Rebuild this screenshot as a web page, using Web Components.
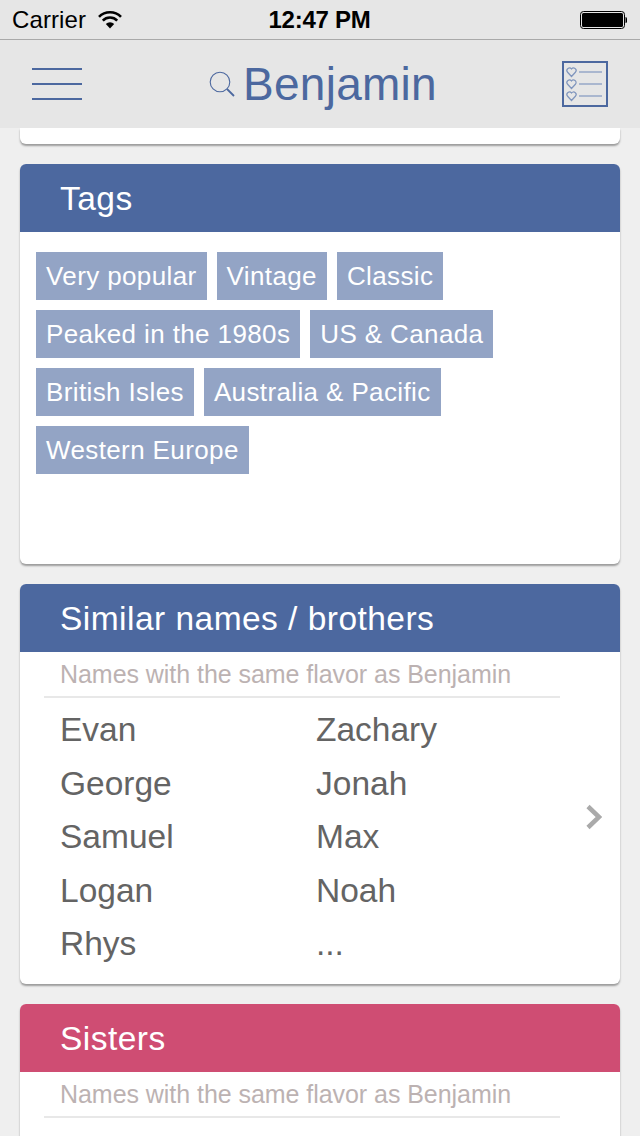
<!DOCTYPE html>
<html>
<head>
<meta charset="utf-8">
<style>
  html, body { margin: 0; padding: 0; }
  body { display: flex; flex-direction: column; width: 640px; height: 1136px; overflow: hidden; background: #efefef; font-family: "Liberation Sans", Arial, sans-serif; }
  status-bar, nav-bar { flex: none; }
  .content { flex: 1; min-height: 0; overflow: hidden; display: flex; flex-direction: column; gap: 20px; padding: 0 20px; }
</style>
</head>
<body>
<status-bar></status-bar>
<nav-bar title="Benjamin"></nav-bar>
<div class="content">
  <info-card stub></info-card>
  <info-card heading="Tags" height="400">
    <tag-list>
      <tag-chip>Very popular</tag-chip>
      <tag-chip>Vintage</tag-chip>
      <tag-chip>Classic</tag-chip>
      <tag-chip>Peaked in the 1980s</tag-chip>
      <tag-chip>US &amp; Canada</tag-chip>
      <tag-chip>British Isles</tag-chip>
      <tag-chip>Australia &amp; Pacific</tag-chip>
      <tag-chip>Western Europe</tag-chip>
    </tag-list>
  </info-card>
  <info-card heading="Similar names / brothers" height="400">
    <name-list note="Names with the same flavor as Benjamin" names="Evan,Zachary,George,Jonah,Samuel,Max,Logan,Noah,Rhys,..."></name-list>
  </info-card>
  <info-card heading="Sisters" color="#cf4d73" height="400">
    <name-list note="Names with the same flavor as Benjamin" names=""></name-list>
  </info-card>
</div>

<script>
class StatusBar extends HTMLElement {
    constructor() {
        super();
        this.attachShadow({ mode: 'open' });
    }
    connectedCallback() {
        this.shadowRoot.innerHTML = `
            <style>
                :host {
                    display: grid;
                    grid-template-columns: 1fr auto 1fr;
                    align-items: center;
                    height: 39px;
                    padding: 0 13px 0 12px;
                    background: #e6e6e6;
                    border-bottom: 1px solid #a9a9a9;
                    color: #000;
                    font-size: 24px;
                }
                .left { display: flex; align-items: center; gap: 12px; }
                .carrier { letter-spacing: 0.1px; }
                .time { font-weight: 700; font-size: 24px; letter-spacing: -0.25px; }
                .right { display: flex; justify-content: flex-end; }
                svg { display: block; }
            </style>
            <div class="left">
                <span class="carrier">Carrier</span>
                <svg width="24" height="20" viewBox="0 0 24 20">
                    <path d="M1 6.8 A15.5 15.5 0 0 1 23 6.8" fill="none" stroke="#000" stroke-width="2.6"/>
                    <path d="M4.8 10.6 A10 10 0 0 1 19.2 10.6" fill="none" stroke="#000" stroke-width="2.6"/>
                    <path d="M12 18.5 L7.8 14 A6 6 0 0 1 16.2 14 Z" fill="#000"/>
                </svg>
            </div>
            <span class="time">12:47 PM</span>
            <div class="right">
                <svg width="47" height="20" viewBox="0 0 47 20">
                    <rect x="0.5" y="1.5" width="44" height="17" rx="3" fill="#e6e6e6" stroke="#000" stroke-width="1"/>
                    <rect x="2" y="3" width="41" height="14" rx="1.5" fill="#000"/>
                    <path d="M45.5 7 h0 a1.5 1.5 0 0 1 1.5 1.5 v3 a1.5 1.5 0 0 1 -1.5 1.5 z" fill="#000"/>
                </svg>
            </div>
        `;
    }
}
customElements.define('status-bar', StatusBar);

class NavBar extends HTMLElement {
    constructor() {
        super();
        this.attachShadow({ mode: 'open' });
    }
    connectedCallback() {
        const title = this.getAttribute('title') || '';
        this.shadowRoot.innerHTML = `
            <style>
                :host {
                    display: flex;
                    align-items: center;
                    justify-content: space-between;
                    height: 88px;
                    padding: 0 32px;
                    background: #e6e6e6;
                    color: #4c689f;
                }
                svg { display: block; }
                .title { display: flex; align-items: center; gap: 8px; margin-left: 2px; font-size: 46px; line-height: 88px; letter-spacing: 0.25px; }
            </style>
            <svg width="50" height="34" viewBox="0 0 50 34">
                <path d="M0 2 H50 M0 17 H50 M0 32 H50" stroke="#4c689f" stroke-width="2"/>
            </svg>
            <div class="title">
                <svg width="26" height="26" viewBox="0 0 26 26">
                    <circle cx="11" cy="11" r="9.8" fill="none" stroke="#4c689f" stroke-width="1.1"/>
                    <path d="M18 18 L25 25" stroke="#4c689f" stroke-width="1.8"/>
                </svg>
                <span>${title}</span>
            </div>
            <svg width="46" height="46" viewBox="0 0 46 46">
                <rect x="1" y="1" width="44" height="44" fill="none" stroke="#4c689f" stroke-width="2"/>
                <g fill="none" stroke="#7f95bd" stroke-width="1.2">
                    <path d="M9.5 15.5 L5.4 11 A2.5 2.5 0 0 1 9.5 8 A2.5 2.5 0 0 1 13.6 11 Z"/>
                    <path d="M9.5 27.5 L5.4 23 A2.5 2.5 0 0 1 9.5 20 A2.5 2.5 0 0 1 13.6 23 Z"/>
                    <path d="M9.5 39.5 L5.4 35 A2.5 2.5 0 0 1 9.5 32 A2.5 2.5 0 0 1 13.6 35 Z"/>
                </g>
                <path d="M17 11 H40 M17 23 H40 M17 35 H40" stroke="#97a8c8" stroke-width="1.6"/>
            </svg>
        `;
    }
}
customElements.define('nav-bar', NavBar);

class InfoCard extends HTMLElement {
    constructor() {
        super();
        this.attachShadow({ mode: 'open' });
    }
    connectedCallback() {
        const heading = this.getAttribute('heading');
        const color = this.getAttribute('color') || '#4c689f';
        const stub = this.hasAttribute('stub');
        const h = stub ? 16 : this.getAttribute('height');
        this.shadowRoot.innerHTML = `
            <style>
                :host {
                    display: block;
                    flex: none;
                    height: ${h}px;
                    background: #fff;
                    border-radius: ${stub ? '0 0 6px 6px' : '6px'};
                    box-shadow: 0 2px 2px rgba(0,0,0,0.35);
                    overflow: hidden;
                }
                .head {
                    height: 68px;
                    padding-left: 40px;
                    background: ${color};
                    color: #fff;
                    font-size: 33.5px;
                    letter-spacing: 0.47px;
                    line-height: 69px;
                }
            </style>
            ${stub ? '' : `<div class="head">${heading}</div>`}
            <slot></slot>
        `;
    }
}
customElements.define('info-card', InfoCard);

class TagList extends HTMLElement {
    constructor() {
        super();
        this.attachShadow({ mode: 'open' }).innerHTML = `
            <style>
                :host { display: flex; flex-wrap: wrap; gap: 10px; padding: 20px 16px; }
            </style>
            <slot></slot>
        `;
    }
}
customElements.define('tag-list', TagList);

class TagChip extends HTMLElement {
    constructor() {
        super();
        this.attachShadow({ mode: 'open' }).innerHTML = `
            <style>
                :host {
                    display: block;
                    height: 48px;
                    padding: 0 10px;
                    background: #93a4c5;
                    color: #fff;
                    font-size: 26px;
                    letter-spacing: 0.38px;
                    line-height: 48px;
                }
            </style>
            <slot></slot>
        `;
    }
}
customElements.define('tag-chip', TagChip);

class NameList extends HTMLElement {
    constructor() {
        super();
        this.attachShadow({ mode: 'open' });
    }
    connectedCallback() {
        const note = this.getAttribute('note') || '';
        const names = (this.getAttribute('names') || '').split(',').filter(Boolean);
        this.shadowRoot.innerHTML = `
            <style>
                :host { display: block; position: relative; }
                .note {
                    margin: 0 60px 0 24px;
                    padding-left: 16px;
                    height: 44px;
                    border-bottom: 2px solid #e8e8e8;
                    color: #bcb2b2;
                    font-size: 25px;
                    letter-spacing: -0.05px;
                    line-height: 44px;
                }
                .names {
                    display: grid;
                    grid-template-columns: 256px 1fr;
                    grid-auto-rows: 53.5px;
                    padding: 5px 0 0 40px;
                    color: #646464;
                    font-size: 33.5px;
                    line-height: 53.5px;
                }
                svg { position: absolute; right: 17px; top: 152px; display: block; }
            </style>
            <div class="note">${note}</div>
            <div class="names">${names.map(n => `<span>${n}</span>`).join('')}</div>
            ${names.length ? `<svg width="18" height="26" viewBox="0 0 18 26">
                <path d="M3 2.5 L14 13 L3 23.5" fill="none" stroke="#aaa" stroke-width="4.5"/>
            </svg>` : ''}
        `;
    }
}
customElements.define('name-list', NameList);
</script>
</body>
</html>
